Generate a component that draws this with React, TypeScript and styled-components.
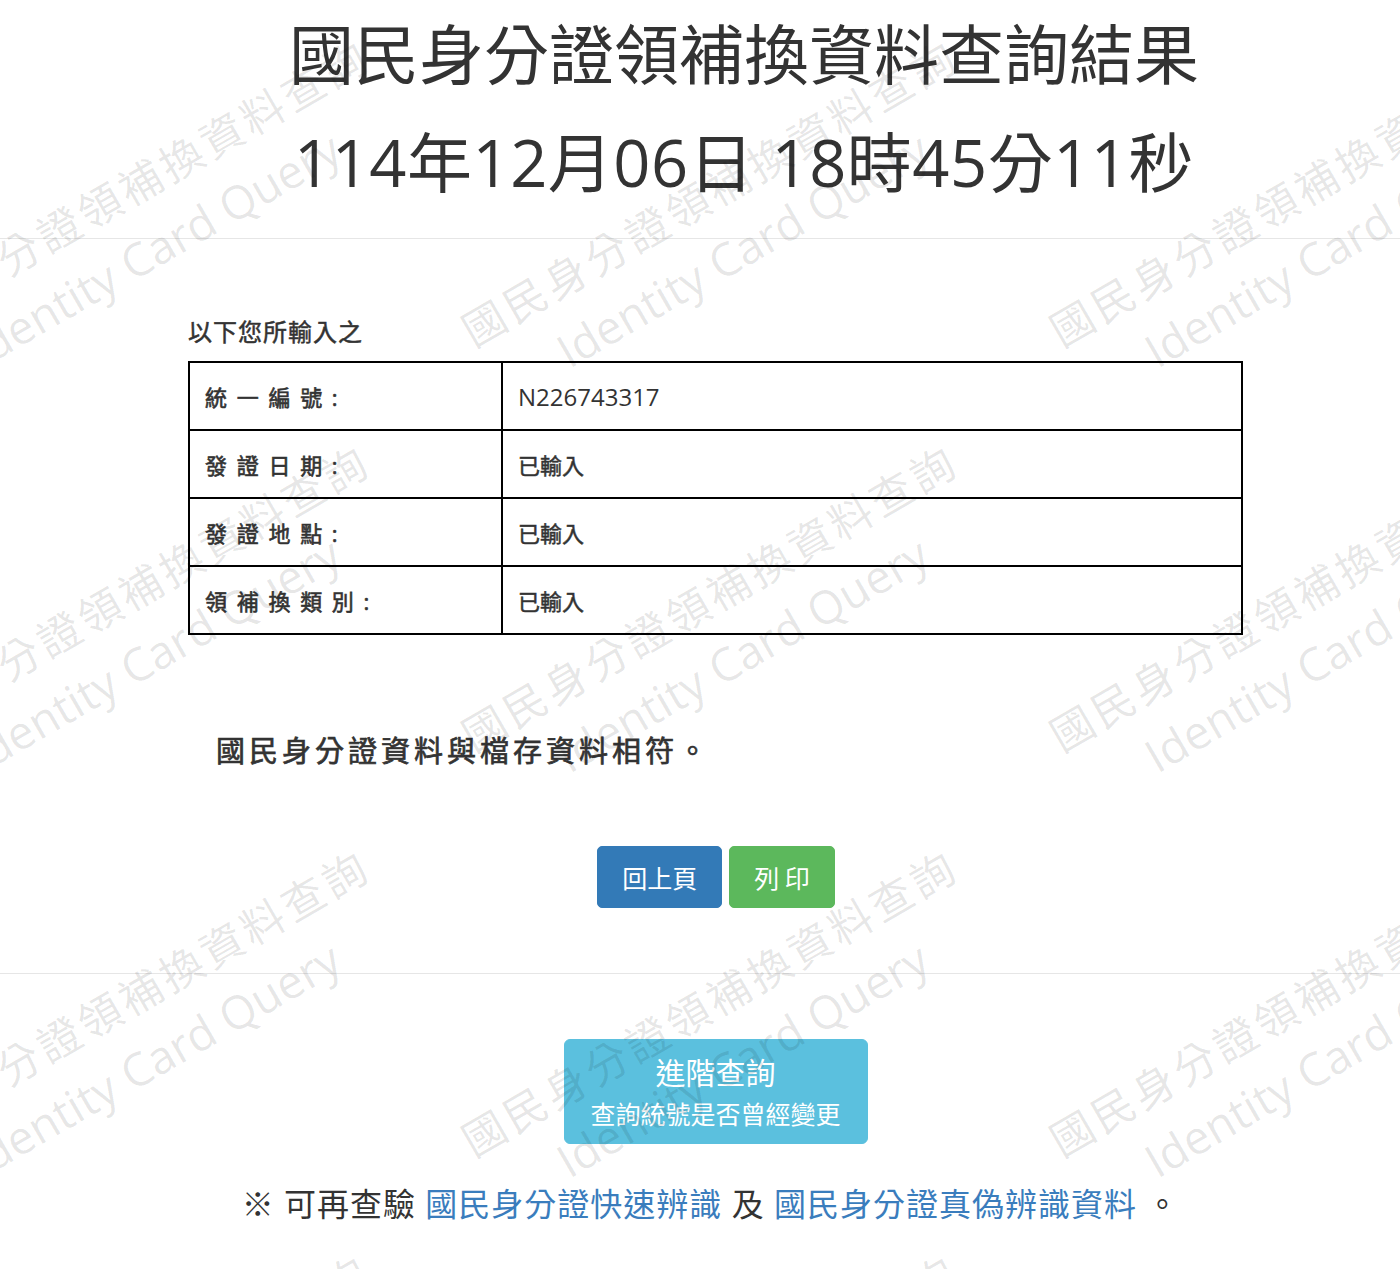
import React from "react";
import styled, { createGlobalStyle } from "styled-components";

const GlobalStyle = createGlobalStyle`
  html, body {
    margin: 0;
    padding: 0;
    background: #ffffff;
  }
  body {
    font-family: "Open Sans", "Noto Sans CJK TC", sans-serif;
    color: #333333;
  }
`;

const rows = [
  { label: "統 一 編 號 :", value: "N226743317", latin: true },
  { label: "發 證 日 期 :", value: "已輸入" },
  { label: "發 證 地 點 :", value: "已輸入" },
  { label: "領 補 換 類 別 :", value: "已輸入" },
];

const App = () => {
  return (
    <Page>
      <GlobalStyle />
      <Header>
        <Title>國民身分證領補換資料查詢結果</Title>
        <Title $spaced>114年12月06日 18時45分11秒</Title>
      </Header>
      <Rule />
      <Content>
        <Intro>以下您所輸入之</Intro>
        <InputTable>
          <tbody>
            {rows.map((r) => (
              <tr key={r.label}>
                <LabelCell>{r.label}</LabelCell>
                <ValueCell $latin={r.latin}>{r.value}</ValueCell>
              </tr>
            ))}
          </tbody>
        </InputTable>
        <Result>國民身分證資料與檔存資料相符。</Result>
        <ButtonRow>
          <ActionButton $color="#337ab7">回上頁</ActionButton>
          <ActionButton $color="#5cb85c">列 印</ActionButton>
        </ButtonRow>
      </Content>
      <Rule $gap={65} />
      <Content>
        <AdvancedRow>
          <AdvancedButton>
            <div className="main">進階查詢</div>
            <div className="sub">查詢統號是否曾經變更</div>
          </AdvancedButton>
        </AdvancedRow>
        <Footer>
          ※ 可再查驗 <a href="#">國民身分證快速辨識</a> 及{" "}
          <a href="#">國民身分證真偽辨識資料</a> 。
        </Footer>
      </Content>
      <Watermark>
        <WatermarkGrid>
          {Array.from({ length: 12 }).map((_, i) => (
            <WatermarkCell key={i}>
              <Stamp>
                <div className="cn">國民身分證領補換資料查詢</div>
                <div className="en">Identity Card Query</div>
              </Stamp>
            </WatermarkCell>
          ))}
        </WatermarkGrid>
      </Watermark>
    </Page>
  );
};

export default App;

const Page = styled.div`
  position: relative;
  min-height: 1269px;
  overflow: hidden;
  background: #ffffff;
`;

const Header = styled.div`
  padding-left: 88px;
  text-align: center;
`;

const Title = styled.h1<{ $spaced?: boolean }>`
  margin: 0;
  font-family: "Open Sans", "Noto Sans CJK TC", sans-serif;
  font-weight: 400;
  font-size: 65px;
  line-height: 108px;
  letter-spacing: ${(p) => (p.$spaced ? "0.5px" : "0")};
  color: #333333;
  white-space: nowrap;
`;

const Rule = styled.hr<{ $gap?: number }>`
  margin: ${(p) => (p.$gap ? p.$gap : 22)}px 0 0 0;
  border: 0;
  border-top: 1px solid #e6e6e6;
  height: 0;
`;

const Content = styled.div`
  width: 1055px;
  margin-left: 188px;
  display: flex;
  flex-direction: column;
`;

const Intro = styled.div`
  margin-top: 76px;
  font-size: 24px;
  line-height: 34px;
  font-weight: 400;
  -webkit-text-stroke: 0.5px #333333;
  letter-spacing: 1px;
  color: #333333;
`;

const InputTable = styled.table`
  margin-top: 12px;
  width: 100%;
  border-collapse: collapse;

  td {
    border: 2px solid #000000;
    height: 68px;
    box-sizing: border-box;
    padding: 0 15px;
    vertical-align: middle;
  }
`;

const LabelCell = styled.td`
  width: 313px;
  font-size: 22px;
  font-weight: 400;
  -webkit-text-stroke: 0.6px #333333;
  letter-spacing: 2px;
  color: #333333;
`;

const ValueCell = styled.td<{ $latin?: boolean }>`
  font-size: ${(p) => (p.$latin ? 24 : 22)}px;
  font-weight: 400;
  -webkit-text-stroke: ${(p) => (p.$latin ? "0" : "0.5px #333333")};
  color: #333333;
`;

const Result = styled.div`
  margin-top: 96px;
  padding-left: 28px;
  font-size: 29px;
  line-height: 40px;
  font-weight: 400;
  -webkit-text-stroke: 0.7px #333333;
  letter-spacing: 4px;
  color: #333333;
`;

const ButtonRow = styled.div`
  margin-top: 75px;
  display: flex;
  justify-content: center;
  gap: 7px;
  padding-left: 1px;
`;

const ActionButton = styled.button<{ $color: string }>`
  height: 62px;
  padding: 0 24px;
  border: 1px solid ${(p) => p.$color};
  border-radius: 5px;
  background: ${(p) => p.$color};
  color: #ffffff;
  font-family: "Noto Sans CJK TC", sans-serif;
  font-size: 25px;
  cursor: pointer;
`;

const AdvancedRow = styled.div`
  margin-top: 65px;
  display: flex;
  justify-content: center;
`;

const AdvancedButton = styled.button`
  width: 304px;
  height: 105px;
  border: 1px solid #5bc0de;
  border-radius: 6px;
  background: #5bc0de;
  color: #ffffff;
  font-family: "Noto Sans CJK TC", sans-serif;
  display: flex;
  flex-direction: column;
  align-items: center;
  justify-content: center;
  gap: 6px;
  padding-bottom: 4px;
  cursor: pointer;

  .main {
    font-size: 30px;
    line-height: 40px;
  }
  .sub {
    font-size: 25px;
    line-height: 32px;
  }
`;

const Footer = styled.div`
  margin-top: 38px;
  padding-right: 10px;
  text-align: center;
  font-size: 32px;
  line-height: 44px;
  letter-spacing: 1px;
  color: #333333;
  white-space: nowrap;

  a {
    color: #3a7dbd;
    text-decoration: none;
  }
`;

const Watermark = styled.div`
  position: absolute;
  inset: 0;
  overflow: hidden;
  pointer-events: none;
  z-index: 2;
`;

const WatermarkGrid = styled.div`
  position: absolute;
  left: -156px;
  top: 18px;
  display: grid;
  grid-template-columns: repeat(3, 588px);
  grid-auto-rows: 405px;
`;

const WatermarkCell = styled.div`
  display: flex;
  align-items: center;
  justify-content: center;
`;

const Stamp = styled.div`
  display: flex;
  flex-direction: column;
  align-items: center;
  transform: rotate(-30deg);
  color: rgba(0, 0, 0, 0.1);
  white-space: nowrap;

  .cn {
    font-family: "Noto Sans CJK TC", sans-serif;
    font-size: 43px;
    line-height: 64px;
    letter-spacing: 4px;
  }
  .en {
    font-family: "Open Sans", sans-serif;
    font-size: 46px;
    line-height: 70px;
  }
`;
